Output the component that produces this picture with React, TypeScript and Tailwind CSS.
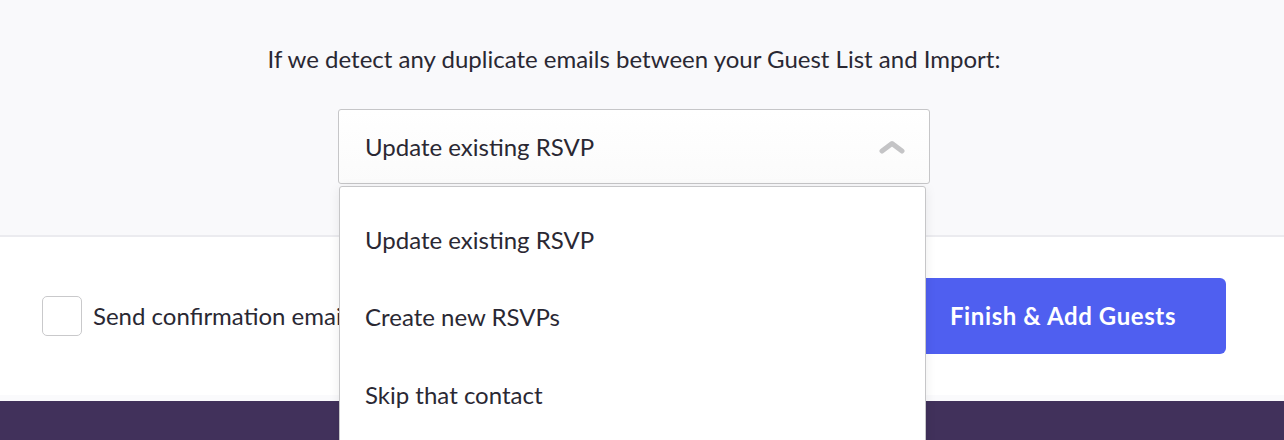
import React from "react";

const OPTIONS = ["Update existing RSVP", "Create new RSVPs", "Skip that contact"];

function ChevronUp() {
  return (
    <svg width="26" height="14" viewBox="0 0 26 14" fill="none">
      <polyline
        points="3,11 13,3.5 23,11"
        stroke="#c4c4c6"
        strokeWidth="5"
        strokeLinecap="round"
        strokeLinejoin="round"
      />
    </svg>
  );
}

export default function App() {
  return (
    <div className="relative h-[440px] w-full overflow-hidden bg-white font-['Lato',sans-serif] text-[#2a2833]">
      <section className="flex h-[237px] flex-col items-center border-b-2 border-[#ebebef] bg-[#f9f9fb] pr-[16px] pt-[44px]">
        <p className="text-[24px] leading-[30px]">
          If we detect any duplicate emails between your Guest List and Import:
        </p>
        <div className="mt-[35px] flex h-[75px] w-[592px] items-center justify-between rounded-[3px] border border-[#c6c6c8] bg-gradient-to-b from-white to-[#fbfbfb] pl-[26px] pr-[24px]">
          <span className="text-[24px]">Update existing RSVP</span>
          <ChevronUp />
        </div>
      </section>

      <section className="flex h-[158px] items-center justify-between bg-white pl-[42px] pr-[58px]">
        <label className="flex w-[297px] items-center gap-[11px] overflow-hidden whitespace-nowrap">
          <span className="h-[40px] w-[40px] shrink-0 rounded-[5px] border border-[#c9c9cb] bg-white" />
          <span className="text-[24px]">Send confirmation emails to imported guests</span>
        </label>
        <button className="h-[76px] w-[326px] rounded-[6px] bg-[#4f5ff0] text-[24px] font-bold tracking-[0.6px] text-white">
          Finish &amp; Add Guests
        </button>
      </section>

      <div className="h-[6px] bg-[#fafafc]" />
      <div className="h-[40px] bg-[#41315b]" />

      <div className="absolute left-[339px] top-[186px] h-[300px] w-[587px] rounded-t-[3px] border border-[#c6c6c8] bg-white pt-[14px] shadow-[0_2px_12px_rgba(0,0,0,0.08)]">
        {OPTIONS.map((o) => (
          <div key={o} className="flex h-[77.5px] items-center pl-[25px] text-[24px]">
            {o}
          </div>
        ))}
      </div>
    </div>
  );
}
